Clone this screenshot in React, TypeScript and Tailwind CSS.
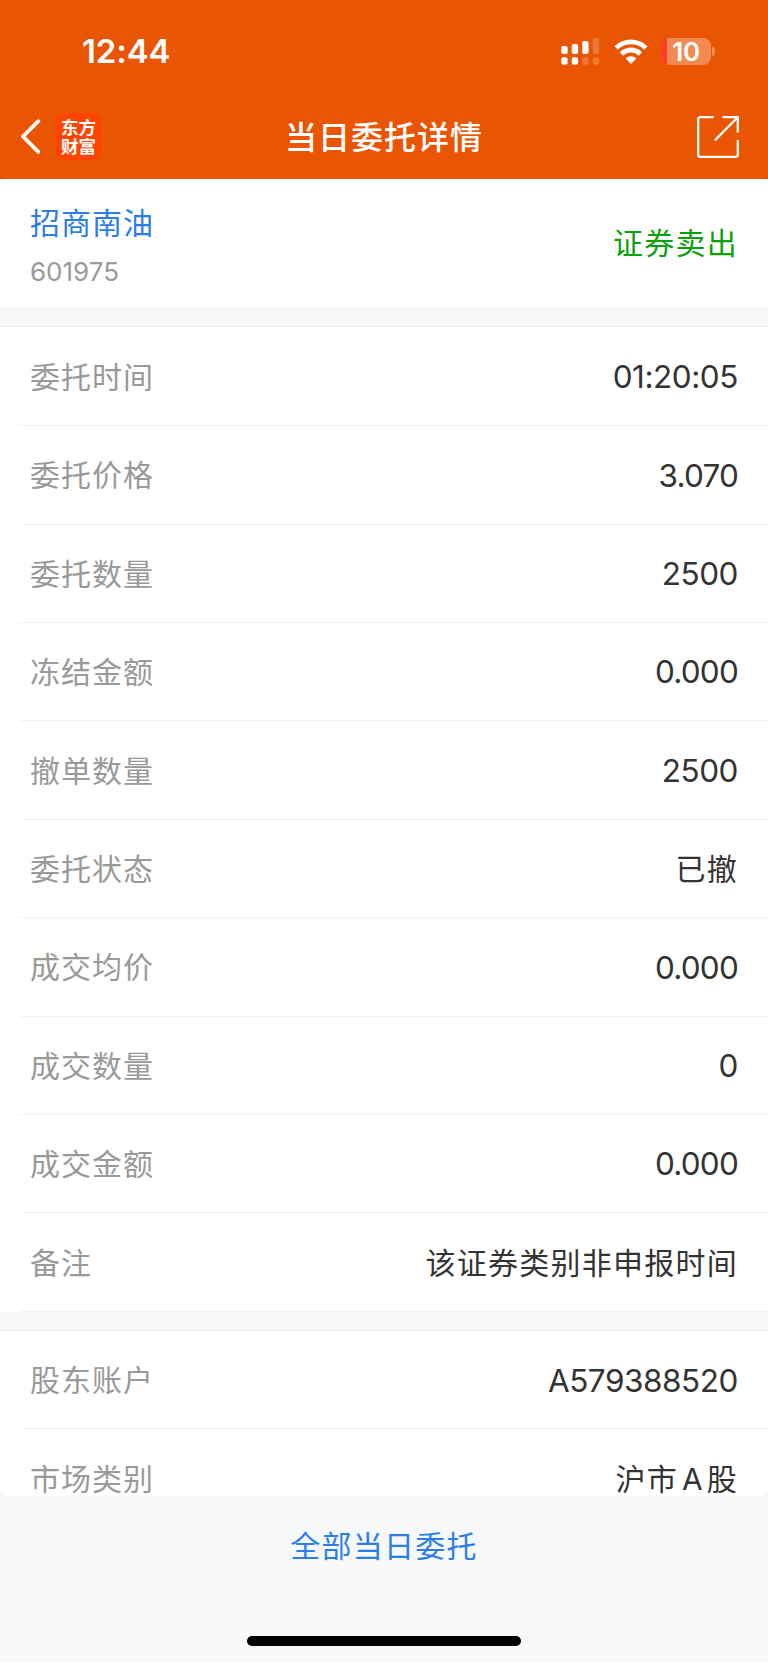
import { Fragment } from "react";

type Detail = {
  label: string;
  value: string;
  numeric?: boolean;
};

const orderDetails: Detail[] = [
  { label: "委托时间", value: "01:20:05", numeric: true },
  { label: "委托价格", value: "3.070", numeric: true },
  { label: "委托数量", value: "2500", numeric: true },
  { label: "冻结金额", value: "0.000", numeric: true },
  { label: "撤单数量", value: "2500", numeric: true },
  { label: "委托状态", value: "已撤" },
  { label: "成交均价", value: "0.000", numeric: true },
  { label: "成交数量", value: "0", numeric: true },
  { label: "成交金额", value: "0.000", numeric: true },
  { label: "备注", value: "该证券类别非申报时间" },
];

const accountDetails: Detail[] = [
  { label: "股东账户", value: "A579388520", numeric: true },
  { label: "市场类别", value: "沪市A股" },
];

const SignalIcon = () => (
  <svg width="39" height="28" viewBox="0 0 39 28" fill="#fff">
    <rect x="0.3" y="9" width="6.4" height="8" rx="2" />
    <rect x="10.7" y="7" width="6.4" height="10" rx="2" />
    <rect x="21.2" y="4" width="6.4" height="13" rx="2" />
    <rect x="31.7" y="1" width="6.4" height="16" rx="2" opacity="0.2" />
    <rect x="0.3" y="20.3" width="6.4" height="7.4" rx="2.2" />
    <rect x="10.7" y="20.3" width="6.4" height="7.4" rx="2.2" />
    <rect x="21.2" y="20.3" width="6.4" height="7.4" rx="2.2" opacity="0.2" />
    <rect x="31.7" y="20.3" width="6.4" height="7.4" rx="2.2" opacity="0.2" />
  </svg>
);

const WifiIcon = () => (
  <svg width="34" height="25" viewBox="0 0 34 25" fill="none" stroke="#fff" strokeWidth="4.8">
    <path d="M2.2 8.9C10.6 0.9 23.4 0.9 31.8 8.9" />
    <path d="M7.5 14.9C13 9.7 21 9.7 26.5 14.9" />
    <path d="M11.6 19.4C14.6 16.4 19.4 16.4 22.4 19.4L17 25Z" fill="#fff" stroke="none" />
  </svg>
);

const BatteryIcon = () => (
  <div className="flex items-center">
    <div className="relative flex h-[27px] w-[49px] items-center justify-center rounded-[8px] bg-[linear-gradient(90deg,#ff3b30_5.5px,#f28a51_5.5px)]">
      <span className="text-[26px] leading-[27px] font-semibold tracking-[-0.3px] text-white">10</span>
    </div>
    <div className="ml-[1.5px] h-[9px] w-[3px] rounded-r-full bg-[#f28a51]" />
  </div>
);

const ShareIcon = () => (
  <svg width="42" height="42" viewBox="0 0 42 42" fill="none" stroke="#fff" strokeWidth="2.3">
    <path d="M16.6 1.2H3.2a2 2 0 0 0-2 2v35.6a2 2 0 0 0 2 2h35.6a2 2 0 0 0 2-2V24" />
    <path d="M25.5 1.2H40.8V16.4" />
    <path d="M40 2L17.8 24.4" />
  </svg>
);

// Latin letters inside Chinese text get a little air on both sides
const MixedText = ({ text }: { text: string }) => (
  <>
    {text.split(/([A-Z]+)/).map((part, i) => (
      <Fragment key={i}>{/^[A-Z]/.test(part) ? <span className="mx-[4px] text-[30px] leading-none tracking-normal">{part}</span> : part}</Fragment>
    ))}
  </>
);

const DetailRow = ({ label, value, numeric }: Detail) => (
  <div className="h-[98.4px] shrink-0 pl-5">
    <div className="flex h-full items-center justify-between border-b border-[#f1f2f4] pt-[1px] pr-[30px] pl-[10px]">
      <span className="text-[30px] tracking-[1px] text-[#999]">{label}</span>
      {numeric ? (
        <span className={`text-[31.5px] text-[#333] ${value.includes(".") ? "tracking-[-0.8px]" : "tracking-[-0.45px]"}`}>{value}</span>
      ) : (
        <span className="text-[30px] tracking-[1.25px] text-[#333]">
          <MixedText text={value} />
        </span>
      )}
    </div>
  </div>
);

const App = () => {
  return (
    <div
      lang="zh-CN"
      className="flex h-[1663px] w-[768px] flex-col overflow-hidden bg-white font-['Inter','Noto_Sans_CJK_SC',sans-serif] leading-none"
    >
      {/* Status bar and title */}
      <header className="h-[179px] shrink-0 bg-[#ea5504] text-white">
        <div className="flex h-[102px] items-center justify-between pr-[53px] pl-[82px]">
          <span className="pt-[1px] text-[33px] font-semibold tracking-[-0.1px]">12:44</span>
          <div className="flex items-center">
            <SignalIcon />
            <div className="ml-[14px]">
              <WifiIcon />
            </div>
            <div className="ml-[14px]">
              <BatteryIcon />
            </div>
          </div>
        </div>
        <div className="grid h-[69px] grid-cols-[1fr_auto_1fr] items-center">
          <div className="flex items-center pl-5">
            <svg width="21" height="35" viewBox="0 0 21 35" fill="none" stroke="#fff" strokeWidth="3.8" strokeLinecap="round" strokeLinejoin="round">
              <path d="M18.3 2.2L3 17.5L18.3 32.8" />
            </svg>
            <div className="ml-[14px] flex size-[47px] flex-col items-center justify-center rounded-[9px] bg-[#ff4400] text-[17.5px] leading-[19px] font-bold">
              <span>东方</span>
              <span>财富</span>
            </div>
          </div>
          <h1 className="pt-[2px] text-[32px] font-medium tracking-[1px]">当日委托详情</h1>
          <div className="flex justify-end pt-[1px] pr-[29px]">
            <ShareIcon />
          </div>
        </div>
      </header>

      <main className="h-[1317px] shrink-0 bg-[#f7f8fa]">
        <div className="flex h-full flex-col overflow-hidden rounded-[7px] bg-[#f5f7f9]">
          <section className="flex h-[128px] shrink-0 items-center justify-between bg-white px-[30px]">
            <div className="flex flex-col pt-[6px]">
              <span className="text-[30px] tracking-[1px] text-[#2b7ee8]">招商南油</span>
              <span className="mt-[21px] text-[26px] text-[#999]">601975</span>
            </div>
            <span className="text-[30px] tracking-[1.25px] text-[#0aa00a]">证券卖出</span>
          </section>

          <section className="mt-[19px] shrink-0 border-t border-[#f0f0f0] bg-white pt-[0.8px]">
            {orderDetails.map((item) => (
              <DetailRow key={item.label} {...item} />
            ))}
          </section>

          <section className="mt-[18.4px] shrink-0 border-t border-[#f0f0f0] bg-white">
            {accountDetails.map((item) => (
              <DetailRow key={item.label} {...item} />
            ))}
          </section>
        </div>
      </main>

      {/* Footer link */}
      <footer className="flex h-[166px] shrink-0 flex-col items-center bg-[#f7f8fa]">
        <button className="mt-[33px] text-[30px] leading-[34px] tracking-[1.25px] text-[#2b7ee8]">全部当日委托</button>
        <div className="mt-[73px] h-[10px] w-[274px] rounded-full bg-black" />
      </footer>
    </div>
  );
};

export default App;
